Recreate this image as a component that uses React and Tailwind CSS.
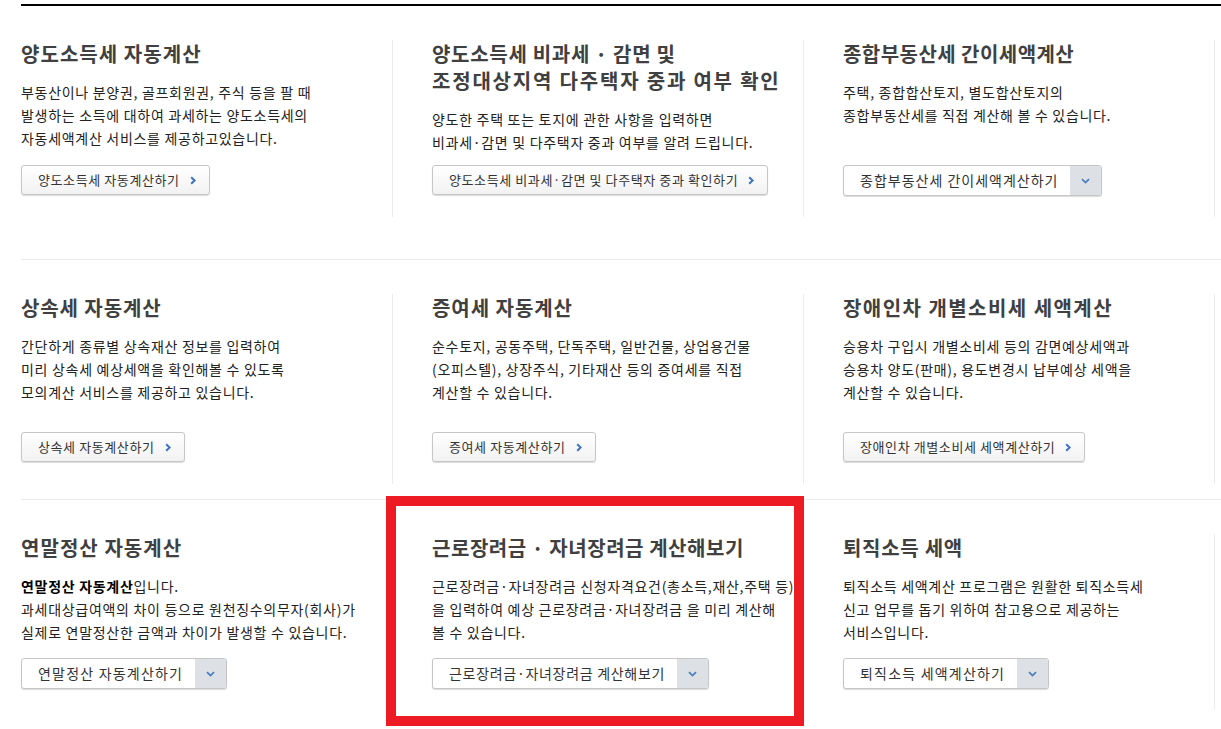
const FONT = { fontFamily: '"Noto Sans CJK KR", "Noto Sans", sans-serif' };

// title lines carry their own tracking so each line matches the reference width
const ROWS = [
  {
    rowClass: 'h-[254px] border-b border-[#ebebeb]',
    boxClass: 'h-[177px]',
    textClass: 'h-[125px]',
    items: [
      {
        title: [['양도소득세 자동계산', 'tracking-[1.05px]']],
        desc: ['부동산이나 분양권, 골프회원권, 주식 등을 팔 때', '발생하는 소득에 대하여 과세하는 양도소득세의', '자동세액계산 서비스를 제공하고있습니다.'],
        button: '양도소득세 자동계산하기',
      },
      {
        title: [
          ['양도소득세 비과세 · 감면 및', 'tracking-[0.7px]'],
          ['조정대상지역 다주택자 중과 여부 확인', 'tracking-[1.8px]'],
        ],
        desc: ['양도한 주택 또는 토지에 관한 사항을 입력하면', '비과세·감면 및 다주택자 중과 여부를 알려 드립니다.'],
        button: '양도소득세 비과세·감면 및 다주택자 중과 확인하기',
      },
      {
        title: [['종합부동산세 간이세액계산', 'tracking-[0.45px]']],
        desc: ['주택, 종합합산토지, 별도합산토지의', '종합부동산세를 직접 계산해 볼 수 있습니다.'],
        select: '종합부동산세 간이세액계산하기',
        selectTracking: 'tracking-[1px]',
      },
    ],
  },
  {
    rowClass: 'h-[240px] border-b border-[#ebebeb]',
    boxClass: 'h-[190px]',
    textClass: 'h-[138px]',
    items: [
      {
        title: [['상속세 자동계산', 'tracking-[0.9px]']],
        desc: ['간단하게 종류별 상속재산 정보를 입력하여', '미리 상속세 예상세액을 확인해볼 수 있도록', '모의계산 서비스를 제공하고 있습니다.'],
        button: '상속세 자동계산하기',
      },
      {
        title: [['증여세 자동계산', 'tracking-[0.95px]']],
        desc: ['순수토지, 공동주택, 단독주택, 일반건물, 상업용건물', '(오피스텔), 상장주식, 기타재산 등의 증여세를 직접', '계산할 수 있습니다.'],
        button: '증여세 자동계산하기',
      },
      {
        title: [['장애인차 개별소비세 세액계산', 'tracking-[1.45px]']],
        desc: ['승용차 구입시 개별소비세 등의 감면예상세액과', '승용차 양도(판매), 용도변경시 납부예상 세액을', '계산할 수 있습니다.'],
        button: '장애인차 개별소비세 세액계산하기',
      },
    ],
  },
  {
    rowClass: 'h-[229px]',
    boxClass: 'h-[176px]',
    textClass: 'h-[124px]',
    items: [
      {
        title: [['연말정산 자동계산', 'tracking-[1.05px]']],
        desc: [
          <>
            <b className="font-bold text-[#000]">연말정산 자동계산</b>입니다.
          </>,
          '과세대상급여액의 차이 등으로 원천징수의무자(회사)가',
          '실제로 연말정산한 금액과 차이가 발생할 수 있습니다.',
        ],
        select: '연말정산 자동계산하기',
        selectTracking: 'tracking-[1.2px]',
      },
      {
        title: [['근로장려금 · 자녀장려금 계산해보기', 'tracking-[0.55px]']],
        desc: ['근로장려금·자녀장려금 신청자격요건(총소득,재산,주택 등)', '을 입력하여 예상 근로장려금·자녀장려금 을 미리 계산해', '볼 수 있습니다.'],
        select: '근로장려금·자녀장려금 계산해보기',
        selectTracking: 'tracking-[0.7px]',
      },
      {
        title: [['퇴직소득 세액', 'tracking-[0.7px]']],
        desc: ['퇴직소득 세액계산 프로그램은 원활한 퇴직소득세', '신고 업무를 돕기 위하여 참고용으로 제공하는', '서비스입니다.'],
        select: '퇴직소득 세액계산하기',
        selectTracking: 'tracking-[1.2px]',
      },
    ],
  },
];

function ChevronRight() {
  return (
    <svg width="6" height="9" viewBox="0 0 6 9" className="shrink-0">
      <path d="M1.2 1.2 L4.6 4.5 L1.2 7.8" fill="none" stroke="#3c72bf" strokeWidth="2" />
    </svg>
  );
}

function ChevronDown() {
  return (
    <svg width="9" height="6" viewBox="0 0 9 6">
      <path d="M1 1.2 L4.5 4.6 L8 1.2" fill="none" stroke="#4a7ec0" strokeWidth="1.8" />
    </svg>
  );
}

function LinkButton({ label }) {
  return (
    <a className="inline-flex h-[30px] items-center gap-[10px] rounded-[3px] border border-[#c6c6c6] bg-gradient-to-b from-white to-[#f2f2f2] pl-[16px] pr-[13px] text-[13px] tracking-[0.6px] text-[#333] shadow-[0_1px_1px_rgba(0,0,0,0.15)]">
      {label}
      <ChevronRight />
    </a>
  );
}

function SelectButton({ label, tracking }) {
  return (
    <div className="inline-flex h-[31px] overflow-hidden rounded-[3px] border border-[#c6c6c6] bg-white shadow-[0_1px_1px_rgba(0,0,0,0.15)]">
      <span className={`flex items-center pl-[16px] pr-[12px] text-[14px] text-[#333] ${tracking}`}>{label}</span>
      <span className="flex w-[31px] items-center justify-center bg-[#dde1e6]">
        <ChevronDown />
      </span>
    </div>
  );
}

function Cell({ item, boxClass, textClass }) {
  return (
    <div className="pt-[37px]">
      <div className={`w-[372px] border-r border-[#ececec] ${boxClass}`}>
        <div className={`-mt-[3px] ${textClass}`}>
          <h3 className="text-[20px] font-bold leading-[27px] text-[#404040]">
            {item.title.map(([t, tr], i) => (
              <div key={i} className={tr}>
                {t}
              </div>
            ))}
          </h3>
          <p className="mt-[14px] text-[14px] leading-[23px] tracking-[0.7px] text-[#222]">
            {item.desc.map((d, i) => (
              <span key={i} className="block whitespace-nowrap">
                {d}
              </span>
            ))}
          </p>
        </div>
        {item.button ? (
          <LinkButton label={item.button} />
        ) : (
          <SelectButton label={item.select} tracking={item.selectTracking} />
        )}
      </div>
    </div>
  );
}

export default function App() {
  return (
    <div className="relative h-[729px] w-[1221px] overflow-hidden bg-white pt-[4px]" style={FONT}>
      <div className="ml-[21px] border-t-2 border-black">
        {ROWS.map((row, r) => (
          <div key={r} className={`grid grid-cols-[411px_411px_411px] ${row.rowClass}`}>
            {row.items.map((item, i) => (
              <Cell key={i} item={item} boxClass={row.boxClass} textClass={row.textClass} />
            ))}
          </div>
        ))}
      </div>

      {/* highlight frame over the 근로장려금 card */}
      <div className="pointer-events-none absolute left-[386px] top-[496px] h-[230px] w-[418px] border-[10px] border-[#ed1c24]" />
    </div>
  );
}
